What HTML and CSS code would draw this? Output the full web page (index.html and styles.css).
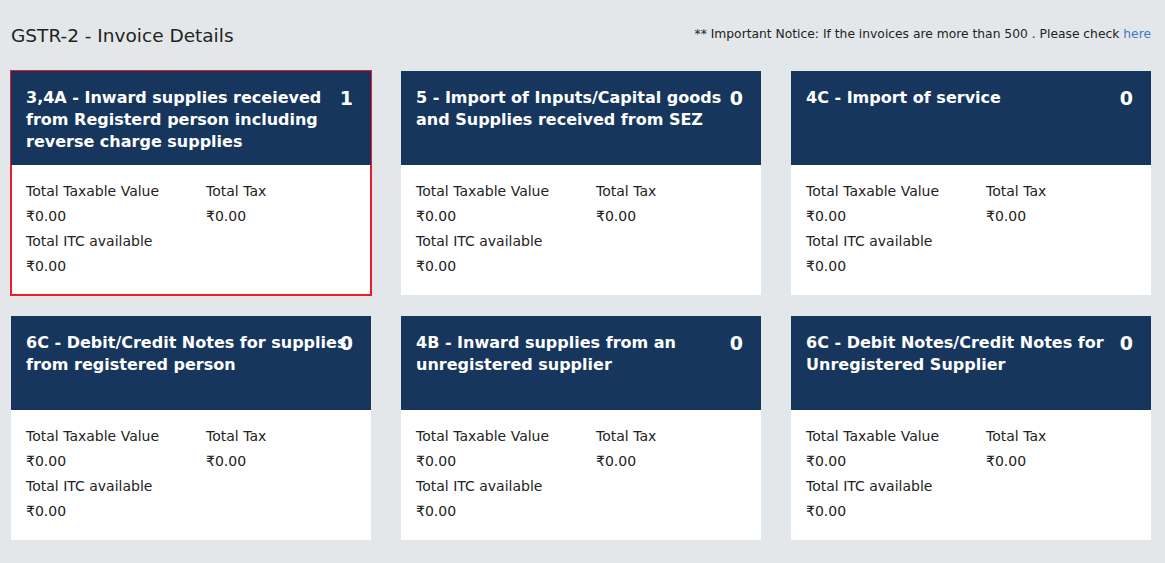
FILE: index.html
```html
<!DOCTYPE html>
<html lang="en">
<head>
    <meta charset="UTF-8">
    <title>GSTR-2 - Invoice Details</title>
    <link rel="stylesheet" href="styles.css">
</head>
<body>

<div class="page">
    <div class="top-bar">
        <h2 class="page-title">GSTR-2 - Invoice Details</h2>
        <p class="notice">** Important Notice: If the invoices are more than 500 . Please check <a href="#">here</a></p>
    </div>

    <div class="tiles">
        <div class="tile active">
            <div class="tile-head">
                <span class="tile-title">3,4A - Inward supplies receieved from Registerd person including reverse charge supplies</span>
                <span class="tile-count">1</span>
            </div>
            <div class="tile-body">
                <div>Total Taxable Value</div><div>Total Tax</div>
                <div>&#8377;0.00</div><div>&#8377;0.00</div>
                <div class="full">Total ITC available</div>
                <div class="full">&#8377;0.00</div>
            </div>
        </div>

        <div class="tile">
            <div class="tile-head">
                <span class="tile-title">5 - Import of Inputs/Capital goods and Supplies received from SEZ</span>
                <span class="tile-count">0</span>
            </div>
            <div class="tile-body">
                <div>Total Taxable Value</div><div>Total Tax</div>
                <div>&#8377;0.00</div><div>&#8377;0.00</div>
                <div class="full">Total ITC available</div>
                <div class="full">&#8377;0.00</div>
            </div>
        </div>

        <div class="tile">
            <div class="tile-head">
                <span class="tile-title">4C - Import of service</span>
                <span class="tile-count">0</span>
            </div>
            <div class="tile-body">
                <div>Total Taxable Value</div><div>Total Tax</div>
                <div>&#8377;0.00</div><div>&#8377;0.00</div>
                <div class="full">Total ITC available</div>
                <div class="full">&#8377;0.00</div>
            </div>
        </div>

        <div class="tile">
            <div class="tile-head">
                <span class="tile-title">6C - Debit/Credit Notes for supplies from registered person</span>
                <span class="tile-count">0</span>
            </div>
            <div class="tile-body">
                <div>Total Taxable Value</div><div>Total Tax</div>
                <div>&#8377;0.00</div><div>&#8377;0.00</div>
                <div class="full">Total ITC available</div>
                <div class="full">&#8377;0.00</div>
            </div>
        </div>

        <div class="tile">
            <div class="tile-head">
                <span class="tile-title">4B - Inward supplies from an unregistered supplier</span>
                <span class="tile-count">0</span>
            </div>
            <div class="tile-body">
                <div>Total Taxable Value</div><div>Total Tax</div>
                <div>&#8377;0.00</div><div>&#8377;0.00</div>
                <div class="full">Total ITC available</div>
                <div class="full">&#8377;0.00</div>
            </div>
        </div>

        <div class="tile">
            <div class="tile-head">
                <span class="tile-title">6C - Debit Notes/Credit Notes for Unregistered Supplier</span>
                <span class="tile-count">0</span>
            </div>
            <div class="tile-body">
                <div>Total Taxable Value</div><div>Total Tax</div>
                <div>&#8377;0.00</div><div>&#8377;0.00</div>
                <div class="full">Total ITC available</div>
                <div class="full">&#8377;0.00</div>
            </div>
        </div>
    </div>
</div>

</body>
</html>
```

FILE: styles.css
```css
body {
    margin: 0;
    background-color: #e4e7ea;
    font-family: "DejaVu Sans", Verdana, sans-serif;
    color: #1a1a1a;
}
.page {
    padding: 0 14px 0 11px;
}
.top-bar {
    display: flex;
    justify-content: space-between;
    align-items: center;
    height: 71px;
}
.page-title {
    margin: 0;
    font-size: 18.5px;
    font-weight: normal;
    color: #222;
}
.notice {
    margin: 0 0 4px 0;
    font-size: 12.3px;
    color: #222;
}
.notice a {
    color: #3b7cc4;
    text-decoration: none;
}
.tiles {
    display: grid;
    grid-template-columns: repeat(3, 360px);
    column-gap: 30px;
    row-gap: 21px;
}
.tile {
    background-color: #fff;
}
.tile.active {
    outline: 2px solid #e5202a;
    outline-offset: -1px;
}
.tile-head {
    position: relative;
    box-sizing: border-box;
    height: 94px;
    padding: 16px 15px 0 15px;
    background-color: #16365d;
    color: #fff;
}
.tile-title {
    display: block;
    font-size: 16px;
    font-weight: bold;
    line-height: 22px;
}
.tile-count {
    position: absolute;
    top: 16px;
    right: 18px;
    font-size: 19px;
    font-weight: bold;
    line-height: 22px;
}
.tile-body {
    display: grid;
    grid-template-columns: 180px 1fr;
    padding: 14px 15px 16px 15px;
    font-size: 14px;
    line-height: 25px;
    color: #222;
}
.tile-body .full {
    grid-column: 1 / 3;
}
```
